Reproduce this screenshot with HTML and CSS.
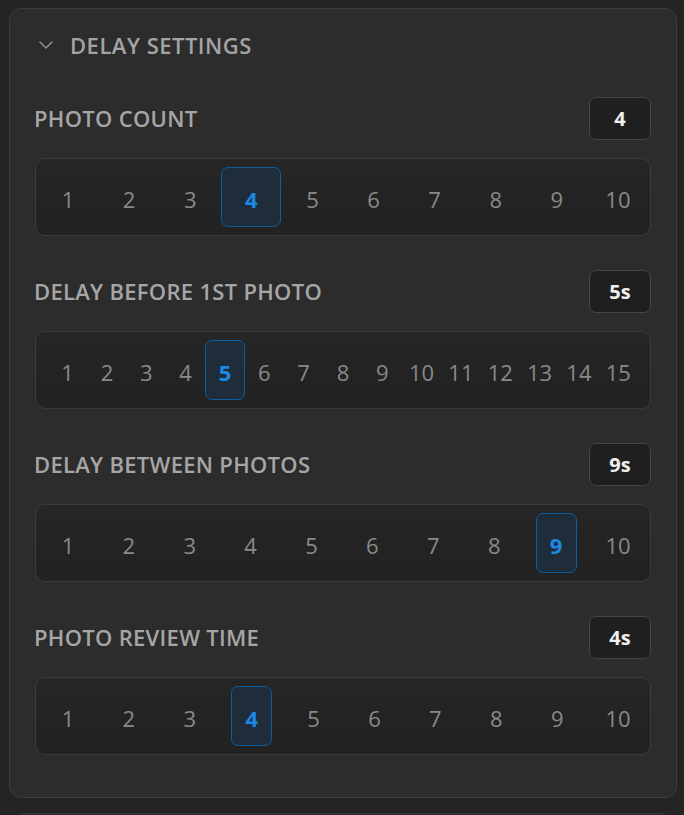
FILE: index.html
```html
<!DOCTYPE html>
<html>
<head>
<meta charset="utf-8">
<link rel="stylesheet" href="styles.css">
</head>
<body>
<div class="card">
  <div class="header">
    <svg class="chev" width="16" height="10" viewBox="0 0 16 10"><path d="M2 2 L8 8 L14 2" fill="none" stroke="#8c8c8c" stroke-width="1.6" stroke-linecap="round" stroke-linejoin="round"/></svg>
    <span class="title">DELAY SETTINGS</span>
  </div>

  <div class="section">
    <div class="row"><span class="label">PHOTO COUNT</span><span class="badge">4</span></div>
    <div class="track">
      <span class="item">1</span><span class="item">2</span><span class="item">3</span><span class="item sel">4</span><span class="item">5</span><span class="item">6</span><span class="item">7</span><span class="item">8</span><span class="item">9</span><span class="item">10</span>
    </div>
  </div>

  <div class="section">
    <div class="row"><span class="label">DELAY BEFORE 1ST PHOTO</span><span class="badge">5s</span></div>
    <div class="track dense">
      <span class="item">1</span><span class="item">2</span><span class="item">3</span><span class="item">4</span><span class="item sel">5</span><span class="item">6</span><span class="item">7</span><span class="item">8</span><span class="item">9</span><span class="item">10</span><span class="item">11</span><span class="item">12</span><span class="item">13</span><span class="item">14</span><span class="item">15</span>
    </div>
  </div>

  <div class="section">
    <div class="row"><span class="label">DELAY BETWEEN PHOTOS</span><span class="badge">9s</span></div>
    <div class="track narrow">
      <span class="item">1</span><span class="item">2</span><span class="item">3</span><span class="item">4</span><span class="item">5</span><span class="item">6</span><span class="item">7</span><span class="item">8</span><span class="item sel">9</span><span class="item">10</span>
    </div>
  </div>

  <div class="section">
    <div class="row"><span class="label">PHOTO REVIEW TIME</span><span class="badge">4s</span></div>
    <div class="track narrow">
      <span class="item">1</span><span class="item">2</span><span class="item">3</span><span class="item sel">4</span><span class="item">5</span><span class="item">6</span><span class="item">7</span><span class="item">8</span><span class="item">9</span><span class="item">10</span>
    </div>
  </div>
</div>
<div class="next-card"></div>
</body>
</html>
```

FILE: styles.css
```css
html, body {
  margin: 0;
  padding: 0;
  background: #242424;
  height: 815px;
  overflow: hidden;
}
body {
  box-sizing: border-box;
  padding: 8px 7px 8px 9px;
  font-family: "Open Sans", "Noto Sans", sans-serif;
}
.card {
  box-sizing: border-box;
  width: 668px;
  background: #2c2c2c;
  border: 1px solid #3d3d3d;
  border-radius: 12px;
  padding: 18px 25px 42px 25px;
}
.header {
  display: flex;
  align-items: center;
  height: 36px;
  line-height: 36px;
}
.chev {
  margin-left: 3px;
  margin-right: 16px;
}
.title {
  color: #a3a3a3;
  font-size: 22px;
  font-weight: 600;
  letter-spacing: 0.5px;
}
.section {
  margin-top: 34px;
}
.section:first-of-type {
  margin-top: 32px;
}
.row {
  display: flex;
  justify-content: space-between;
  align-items: center;
  height: 43px;
}
.label {
  margin-left: -1px;
  color: #a6a6a6;
  font-size: 22px;
  font-weight: 600;
  letter-spacing: 0.3px;
  line-height: 43px;
}
.badge {
  box-sizing: border-box;
  min-width: 62px;
  height: 43px;
  display: flex;
  align-items: center;
  justify-content: center;
  background: #1f1f1f;
  border: 1px solid #454545;
  border-radius: 7px;
  color: #f0f0f0;
  font-size: 20px;
  font-weight: 700;
}
.track {
  box-sizing: border-box;
  margin-top: 18px;
  height: 78px;
  display: flex;
  gap: 1px;
  padding: 8px 2px;
  background: linear-gradient(180deg, #262626 0%, #232323 60%, #222222 100%);
  border: 1px solid #3b3b3b;
  border-radius: 10px;
}
.track.dense {
  gap: 0;
  padding: 8px 12px;
}
.item {
  flex: 1;
  display: flex;
  align-items: center;
  justify-content: center;
  padding-top: 3px;
  color: #898989;
  font-size: 22px;
  font-weight: 400;
  border: 1px solid transparent;
  border-radius: 7px;
}
.item.sel {
  background: #1f2d3a;
  border-color: #0c5d9f;
  color: #1b88e6;
  font-weight: 700;
}
.track.narrow .item.sel {
  flex: 0 0 39px;
  margin: 0 10.5px;
}
.next-card {
  margin: 15px 6px 0 5px;
  height: 20px;
  border: 1px solid #3a3a3a;
  border-radius: 12px;
  background: #2a2a2a;
}
```
